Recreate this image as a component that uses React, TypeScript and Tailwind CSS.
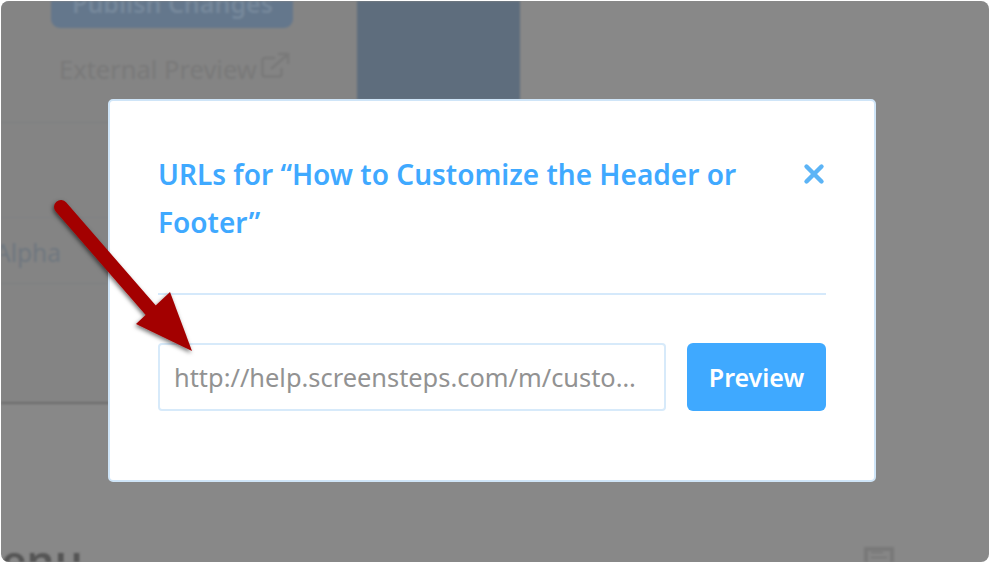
import { X } from "lucide-react";

function BackgroundPage() {
  return (
    <div className="flex h-full flex-col blur-[0.8px] font-['Noto_Sans',sans-serif]">
      <div className="flex h-[403px]">
        <div className="flex w-[356px] flex-col bg-[#848484]">
          <div className="h-[122px] border-b border-[#7c7f81] pl-[50px]">
            <div className="relative h-[27px] w-[242px] overflow-hidden rounded-b-[9px] bg-[#64778c]">
              <span className="absolute left-[21px] top-[-15px] whitespace-nowrap text-[25px] leading-[34px] font-semibold text-[#76889b]">
                Publish Changes
              </span>
            </div>
            <div className="mt-[24px] flex items-center gap-[4px] pl-[8px] leading-[34px] text-[#797979]">
              <span className="text-[25.500px]">External Preview</span>
              <svg width="29" height="27" viewBox="0 0 29 27" fill="none" stroke="#797979" strokeWidth="2.4" className="-mt-2">
                <path d="M14 6H4a2.5 2.5 0 0 0-2.5 2.5V22A2.5 2.5 0 0 0 4 24.500h14a2.500 2.500 0 0 0 2.500-2.500v-6" />
                <path d="M10 17 26 3" />
                <path d="M17 2h10v10" />
              </svg>
            </div>
          </div>
          <div className="h-[95px] border-b border-[#7f8183]" />
          <div className="flex h-[66px] items-center overflow-hidden border-b border-[#7c7f81]">
            <span className="-ml-[6px] mt-[5px] text-[24.500px] text-[#6f777f]">Alpha</span>
          </div>
          <div className="flex-1 border-b-2 border-[#6c6c6c]" />
        </div>
        <div className="h-[99px] w-[163px] bg-[#5e6d7d]" />
      </div>
      <div className="flex flex-1 items-end justify-between overflow-hidden">
        <span className="-mb-[22px] -ml-[41px] text-[44px] leading-[48px] font-semibold text-[#555]">Menu</span>
        <div className="mr-[95px] h-[15px] w-[30px] border-[4px] border-b-0 border-[#797979] bg-[#868686] px-[3px] pt-[1px]">
          <div className="h-[1px] w-[12px] bg-[#707070]" />
          <div className="mt-[4px] h-[1px] w-[16px] bg-[#707070]" />
        </div>
      </div>
    </div>
  );
}

function UrlModal() {
  return (
    <div className="absolute left-[107px] top-[98px] h-[383px] w-[768px] rounded-[5px] border-2 border-[#cfe5f8] bg-white px-[48px] font-['Noto_Sans',sans-serif]">
      <div className="flex h-[194px] items-start justify-between border-b-2 border-[#d5e9fb] pt-[49px]">
        <h2 className="w-[600px] text-[28px] leading-[48px] font-semibold text-[#3fa9ff]">
          URLs for “How to Customize the Header or Footer”
        </h2>
        <X size={30} strokeWidth={3.5} className="mr-[-3px] mt-[9px] text-[#5cb4f6]" />
      </div>
      <div className="mt-[48px] flex justify-between">
        <input
          readOnly
          value="http://help.screensteps.com/m/custo…"
          className="h-[68px] w-[508px] rounded-[4px] border-2 border-[#d7eafa] bg-white px-[14px] text-[25.400px] text-[#929292] outline-none"
        />
        <button className="h-[68px] w-[139px] rounded-[6px] bg-[#3fa9ff] pt-[2px] text-[25px] font-semibold text-white">
          Preview
        </button>
      </div>
    </div>
  );
}

function Arrow() {
  return (
    <svg width="200" height="320" viewBox="0 0 200 320" className="absolute left-0 top-[179px]">
      <defs>
        <filter id="arrow-shadow" x="-20%" y="-20%" width="140%" height="140%">
          <feDropShadow dx="-1" dy="2" stdDeviation="2" floodColor="#000" floodOpacity="0.55" />
        </filter>
      </defs>
      <g filter="url(#arrow-shadow)" fill="#a30000">
        <path d="M60 27 153 134" stroke="#a30000" strokeWidth="14" strokeLinecap="round" fill="none" />
        <path d="M169 112 191 171 135 144Z" />
      </g>
    </svg>
  );
}

export default function App() {
  return (
    <div className="h-[564px] w-[990px] bg-white pl-[1px] pt-[1px]">
      <div className="relative h-[561px] w-[988px] overflow-hidden rounded-lg bg-[#888888]">
        <BackgroundPage />
        <UrlModal />
        <Arrow />
      </div>
    </div>
  );
}
